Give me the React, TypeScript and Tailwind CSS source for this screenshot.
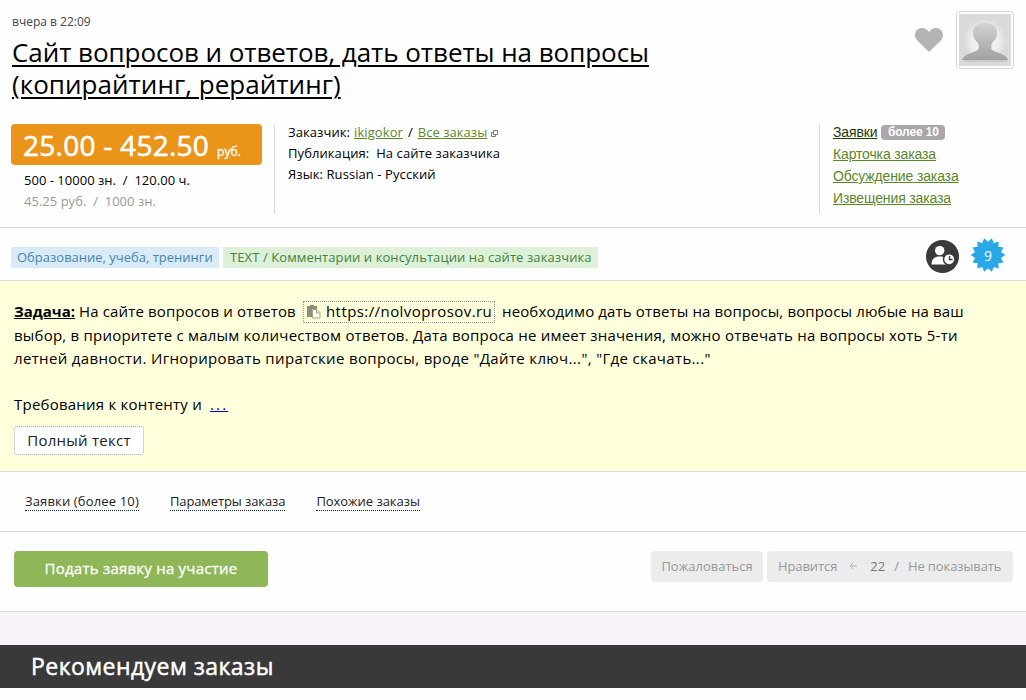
import React from "react";

const sideLinks = ["Карточка заказа", "Обсуждение заказа", "Извещения заказа"];

const HeartIcon = () => (
  <svg width="28" height="24" viewBox="0 0 28 24" className="mt-[17px]">
    <path
      d="M14 24 2.5 12.8C-1 9.2-.6 3.8 2.600 1.400 6.200-1.300 11.500-.2 14 4.200 16.500-.2 21.800-1.300 25.400 1.400 28.600 3.800 29 9.200 25.500 12.800Z"
      fill="#b4b4b4"
    />
  </svg>
);

const Avatar = () => (
  <div className="w-[58px] h-[58px] rounded border border-[#d8d3d8] bg-white p-[2px]">
    <svg width="52" height="52" viewBox="0 0 52 52">
      <defs>
        <radialGradient id="glow" cx="50%" cy="50%" r="50%">
          <stop offset="0.6" stopColor="#f0f0f0" />
          <stop offset="1" stopColor="#dadada" />
        </radialGradient>
        <linearGradient id="person" x1="0" y1="0" x2="0" y2="1">
          <stop offset="0" stopColor="#d4d4d4" />
          <stop offset="0.5" stopColor="#b8b8b8" />
          <stop offset="1" stopColor="#a2a2a2" />
        </linearGradient>
      </defs>
      <rect width="52" height="52" fill="#dadada" />
      <ellipse cx="26" cy="27" rx="21" ry="23" fill="url(#glow)" />
      <path
        d="M26 9c-8 0-12 4-12 9 0 4 1 7 4 10 2 2 2 4 1.500 7C19 38 5 39 3 46h46c-2-7-16-8-16.500-11-.5-3-.5-5 1.500-7 3-3 4-6 4-10 0-5-4-9-12-9Z"
        fill="url(#person)"
      />
      <path d="M5 46h43v2H5z" fill="#cacaca" />
    </svg>
  </div>
);

const PopupIcon = () => (
  <svg width="7" height="7" viewBox="0 0 7 7" fill="none" stroke="#777" className="ml-1 mt-px">
    <path d="M2.500.5h4v4h-4z" />
    <path d="M2.500 2.500h-2v4h4v-2" />
  </svg>
);

const PasteIcon = () => (
  <svg width="14" height="14" viewBox="0 0 14 14" className="mr-[5px]">
    <path d="M0 1h3V0h4v1h3v3H5v8H0Z" fill="#8f8c78" />
    <path d="M5.500 4.500h4.500l3 3v5.500H5.500Z" fill="#fffef0" stroke="#a5a28c" />
    <path d="M9.500 4.500v3.500h3.500" fill="none" stroke="#a5a28c" />
  </svg>
);

const UserClockIcon = () => (
  <svg width="33" height="33" viewBox="0 0 33 33" className="mt-px">
    <circle cx="16.500" cy="16.500" r="16.500" fill="#3a3a3a" />
    <circle cx="13.700" cy="10.600" r="4.700" fill="#fff" />
    <path d="M5.500 24.500c0-5.500 3-8 8.200-8 5.300 0 8.300 2.500 8.300 8Z" fill="#fff" />
    <circle cx="23.200" cy="19.300" r="6.400" fill="#3a3a3a" />
    <circle cx="23.200" cy="19.300" r="4.900" fill="#fff" />
    <path d="M23.500 16v3.500h3" fill="none" stroke="#3a3a3a" strokeWidth="1.300" />
  </svg>
);

// 14-pointed star, the valleys sit on the vertical axis
const starPoints = Array.from({ length: 28 }, (_, i) => {
  const r = i % 2 === 0 ? 13.3 : 17.2;
  const a = (i * Math.PI) / 14;
  return `${17 + r * Math.sin(a)},${17 - r * Math.cos(a)}`;
}).join(" ");

const StarBadge = () => (
  <svg width="34" height="34" viewBox="0 0 34 34" className="-mt-px">
    <polygon points={starPoints} fill="#29a8e8" />
    <text x="17" y="23" textAnchor="middle" fontSize="14" fill="#fff">
      9
    </text>
  </svg>
);

const Header = () => (
  <header className="h-[228px] border-b border-[#d9d9d9]">
    <div className="flex h-[124px] justify-between pl-3 pr-3">
      <div>
        <div className="mt-[13px] h-[18px] text-xs leading-[18px] text-[#444]">вчера в 22:09</div>
        <h1 className="mt-[5px] text-[26px] leading-[32px] text-black whitespace-nowrap underline decoration-2 underline-offset-[3px]">
          <span className="block tracking-[-0.06px]">Сайт вопросов и ответов, дать ответы на вопросы</span>
          <span className="block tracking-[0.04px]">(копирайтинг, рерайтинг)</span>
        </h1>
      </div>
      <div className="mt-[11px] flex gap-[13px]">
        <HeartIcon />
        <Avatar />
      </div>
    </div>
    <div className="flex h-[90px] pl-[11px]">
      <div className="w-[251px]">
        <div className="flex h-[41px] items-baseline rounded bg-[#ea9419] pl-3 text-white whitespace-nowrap">
          <span className="w-[194px] text-[28px] leading-[43px] tracking-[0.27px] [-webkit-text-stroke:0.6px_white]">
            25.00 - 452.50
          </span>
          <span className="text-xs tracking-[0.1px] [-webkit-text-stroke:0.3px_white]">руб.</span>
        </div>
        <div className="pl-[13px] text-[13px] leading-[21px] tracking-[0.02px] whitespace-nowrap">
          <div className="mt-[5px]">500 - 10000 зн. &nbsp;/ &nbsp;120.00 ч.</div>
          <div className="text-[#999]">45.25 руб. &nbsp;/ &nbsp;1000 зн.</div>
        </div>
      </div>
      <div className="ml-3 w-[545px] border-l border-[#d9d9d9] pl-[13px] text-[13px] leading-[21px] tracking-[0.08px] whitespace-nowrap">
        <div className="-mt-[2px] flex items-center">
          <span>Заказчик:</span>
          <a className="ml-1 text-[#5c8727] underline">ikigokor</a>
          <span className="mx-[5px]">/</span>
          <a className="tracking-[0.04px] text-[#5c8727] underline">Все заказы</a>
          <PopupIcon />
        </div>
        <div>Публикация: &nbsp;На сайте заказчика</div>
        <div>Язык: Russian - Русский</div>
      </div>
      <nav className="border-l border-[#d9d9d9] pl-[13px] font-['Liberation_Sans',sans-serif] text-sm leading-[22px] tracking-[-0.14px] whitespace-nowrap">
        <div className="-mt-[3px] flex items-center">
          <a className="text-[#1f3b08] underline">Заявки</a>
          <span className="ml-1 h-[15px] w-16 rounded bg-[#aaa6aa] text-center text-xs leading-[15px] font-bold text-white">
            более 10
          </span>
        </div>
        {sideLinks.map((link) => (
          <a key={link} className="block text-[#5c8727] underline">
            {link}
          </a>
        ))}
      </nav>
    </div>
  </header>
);

const Tags = () => (
  <section className="flex h-[53px] items-center justify-between border-b border-[#d9d9d9] pl-[11px] pr-[21px]">
    <div className="mt-[7px] flex gap-1 text-[13px] leading-[21px] whitespace-nowrap">
      <span className="w-52 bg-[#d9ebf7] pl-[6px] text-[#4784ad]">Образование, учеба, тренинги</span>
      <span className="w-[375px] bg-[#ddf1d8] pl-[7px] tracking-[0.09px] text-[#448240]">
        TEXT / Комментарии и консультации на сайте заказчика
      </span>
    </div>
    <div className="mt-[3px] flex items-center gap-3">
      <UserClockIcon />
      <StarBadge />
    </div>
  </section>
);

const Task = () => (
  <section className="h-[191px] border-b border-[#d9d9d9] bg-[#ffffdb] pl-[14px] pt-[19px] text-[15px] leading-[23.300px] text-black whitespace-nowrap">
    <div className="flex h-[24px] items-center">
      <b className="w-[60px] underline">Задача:</b>
      <span className="ml-[5px] w-[217px] tracking-[0.15px]">На сайте вопросов и ответов</span>
      <span className="mx-[7px] flex h-[22px] w-[192px] items-center border border-dotted border-[#999] pl-[3px] tracking-[0.42px]">
        <PasteIcon />
        https://nolvoprosov.ru
      </span>
      <span className="tracking-[0.14px]">необходимо дать ответы на вопросы, вопросы любые на ваш</span>
    </div>
    <div className="tracking-[0.215px]">
      выбор, в приоритете с малым количеством ответов. Дата вопроса не имеет значения, можно отвечать на вопросы хоть 5-ти
    </div>
    <div className="tracking-[0.34px]">
      летней давности. Игнорировать пиратские вопросы, вроде "Дайте ключ...", "Где скачать..."
    </div>
    <div className="mt-[22px] tracking-[0.22px]">
      Требования к контенту и <a className="ml-1 tracking-[2.1px] text-[#0000cc] underline">...</a>
    </div>
    <button className="mt-[10px] block h-[29px] w-[130px] rounded-[3px] border border-dotted border-[#aaa] bg-white tracking-[0.25px] text-[#222]">
      Полный текст
    </button>
  </section>
);

const Tabs = () => (
  <section className="flex h-[60px] items-start gap-[31px] border-b border-[#d9d9d9] pl-[25px] pt-[21px] text-[13px] leading-[17px] text-[#222] whitespace-nowrap">
    <a className="h-[18px] border-b border-dotted border-[#123] tracking-[0.15px]">Заявки (более 10)</a>
    <a className="h-[18px] border-b border-dotted border-[#123] tracking-[-0.1px]">Параметры заказа</a>
    <a className="h-[18px] border-b border-dotted border-[#123] tracking-[-0.05px]">Похожие заказы</a>
  </section>
);

const Actions = () => (
  <section className="flex h-[80px] items-start justify-between border-b border-[#d9d9d9] pl-[14px] pr-[13px] pt-[19px] whitespace-nowrap">
    <button className="h-[36px] w-[254px] rounded bg-[#8fb657] pb-px text-[15px] tracking-[0.23px] text-white [-webkit-text-stroke:0.3px_white]">
      Подать заявку на участие
    </button>
    <div className="flex gap-1 text-[13px] leading-[31px] text-[#999]">
      <div className="h-[31px] w-28 rounded bg-[#ececec] text-center">Пожаловаться</div>
      <div className="flex h-[31px] w-[246px] rounded bg-[#ececec] pl-[11px]">
        <span className="tracking-[-0.1px]">Нравится</span>
        <svg width="8" height="8" viewBox="0 0 8 8" className="ml-3 mt-[11px]" fill="none" stroke="#b5b5b5">
          <path d="M4 1 1 4l3 3M1 4h7" />
        </svg>
        <span className="ml-[13px] text-[#777]">22</span>
        <span className="ml-[9px]">/</span>
        <span className="ml-[9px] tracking-[-0.1px]">Не показывать</span>
      </div>
    </div>
  </section>
);

const App = () => {
  return (
    <div className="h-[700px] w-[1026px] overflow-hidden bg-[#fefefe] font-['Open_Sans','Noto_Sans',sans-serif] text-black">
      <Header />
      <Tags />
      <Task />
      <Tabs />
      <Actions />
      <div className="h-[33px] bg-[#f7f3f8]" />
      <footer className="h-[43px] bg-[#393939] pl-[31px] text-[23px] leading-[42px] tracking-[0.45px] text-white [-webkit-text-stroke:0.5px_white]">
        Рекомендуем заказы
      </footer>
    </div>
  );
};

export default App;
